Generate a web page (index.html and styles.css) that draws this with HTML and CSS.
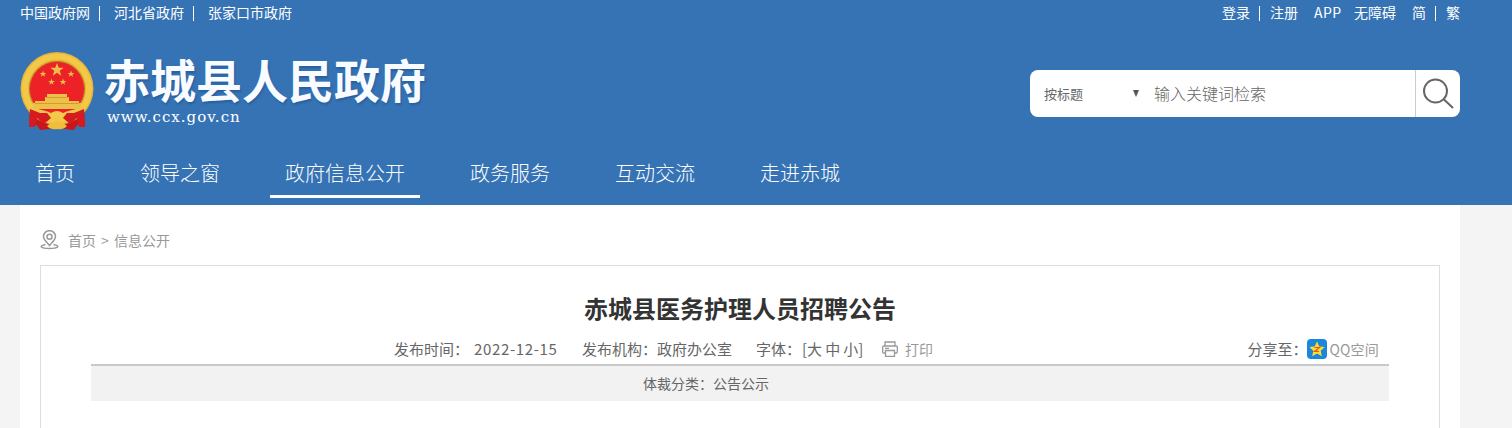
FILE: index.html
```html
<!DOCTYPE html>
<html lang="zh-CN">
<head>
    <meta charset="UTF-8">
    <title>赤城县医务护理人员招聘公告</title>
    <link rel="stylesheet" href="styles.css">
</head>
<body>
    <header class="header">
        <div class="top">
            <div class="top-links">
                <a>中国政府网</a><i class="sep"></i><a>河北省政府</a><i class="sep"></i><a>张家口市政府</a>
            </div>
            <div class="top-user">
                <a class="login">登录</a><i></i><a class="reg">注册</a><a class="app">APP</a><a class="wza">无障碍</a><a class="jian">简</a><i></i><a class="fan">繁</a>
            </div>
        </div>
        <div class="banner">
            <svg class="emblem" width="74" height="80" viewBox="0 0 74 80">
                <path d="M10 54 L9 75 L17 73 L20 78 L37 76 L54 78 L57 73 L65 75 L64 54Z" fill="#c8161b"/>
                <circle cx="37" cy="36.500" r="36.500" fill="#e6b43a"/>
                <circle cx="37" cy="36.500" r="32" fill="none" stroke="#f2c846" stroke-width="6"/>
                <circle cx="37" cy="37" r="27.500" fill="#ec2227" stroke="#b87a1c" stroke-width="1"/>
                <g fill="#edc04a">
                    <path id="star" d="M37 11l1.700 4.800h5l-4 3 1.500 4.900-4.200-3-4.200 3 1.500-4.900-4-3h5z"/>
                    <use href="#star" transform="translate(4.500 13) scale(.5)"/>
                    <use href="#star" transform="translate(32.500 13) scale(.5)"/>
                    <use href="#star" transform="translate(13 21) scale(.5)"/>
                    <use href="#star" transform="translate(24.500 21) scale(.5)"/>
                    <path d="M27 42h20v3h2v4h10v2h2v6H13v-6h2v-2h10v-4h2z"/>
                </g>
                <path d="M26 45.500h22M15 51.500h44" stroke="#c98c22" stroke-width=".7"/>
                <path d="M11 56 Q25 58 31 61 Q37 57 43 61 Q49 58 63 56 L59 63 L49 65 Q37 73 25 65 L15 63Z" fill="#f0c648"/>
                <path d="M10 57 L20 61 L27 61 L31 66 L24 72 L17 66 L15 75 L9 75Z M64 57 L54 61 L47 61 L43 66 L50 72 L57 66 L59 75 L65 75Z" fill="#d51b1f"/>
                <path d="M30 62q7-5 14 0l-2 5q-5-3-10 0z" fill="#f3c94c"/>
                <path d="M27 74 Q37 65 47 74 Q43 78 37 77 Q31 78 27 74Z" fill="#f0bd3d"/>
            </svg>
            <div class="site-name">
                <div class="name">赤城县人民政府</div>
                <div class="domain">www.ccx.gov.cn</div>
            </div>
            <div class="search">
                <div class="select"><span>按标题</span><i class="arrow"></i></div>
                <div class="keyword">输入关键词检索</div>
                <div class="search-btn">
                    <svg width="32" height="32" viewBox="0 0 32 32" fill="none" stroke="#666" stroke-width="2">
                        <circle cx="12.500" cy="13" r="11.500"/>
                        <path d="M20.500 21l9.500 9"/>
                    </svg>
                </div>
            </div>
        </div>
        <nav class="nav">
            <a>首页</a>
            <a>领导之窗</a>
            <a class="on">政府信息公开</a>
            <a>政务服务</a>
            <a>互动交流</a>
            <a>走进赤城</a>
        </nav>
    </header>
    <main class="main">
        <div class="crumb">
            <svg width="20" height="20" viewBox="0 0 20 20" fill="none" stroke="#999" stroke-width="1.500">
                <path d="M9.500 15.500C6 11.500 3.500 9.500 3.500 6.500a6 5.800 0 0 1 12 0c0 3-2.500 5-6 9z"/>
                <circle cx="9.500" cy="6.700" r="2.500"/>
                <path d="M5.500 14.500C-2 16 1 18.500 9.500 18.500S21 16 13.500 14.500"/>
            </svg>
            <a>首页</a><span class="gt">&gt;</span><a>信息公开</a>
        </div>
        <article class="article">
            <h1>赤城县医务护理人员招聘公告</h1>
            <div class="info">
                <span>发布时间：</span><span class="date">2022-12-15</span>
                <span class="org">发布机构：政府办公室</span>
                <span>字体：</span><span class="sizes">[大 中 小]</span>
                <span class="print">
                    <svg width="16" height="16" viewBox="0 0 16 16" fill="none" stroke="#999" stroke-width="1.300">
                        <path d="M3 5V1h10v4M3.500 12H1.800Q.7 12 .7 11V6Q.7 5 1.800 5h12.400Q15.300 5 15.300 6v5q0 1-1.100 1h-1.700M3.500 9.500h9v5.800h-9zM3 7.300h4"/>
                    </svg>
                    打印
                </span>
                <span class="share">分享至：
                    <svg width="20" height="20" viewBox="0 0 20 20">
                        <rect width="20" height="20" rx="4" fill="#1a86dc"/>
                        <path d="M10 2.500l2.300 5 5.400.6-4 3.700 1.100 5.400-4.800-2.700-4.800 2.700 1.100-5.400-4-3.700 5.400-.6z" fill="#ffdf2e"/>
                        <path d="M7.500 8.500h5l-5 3.800h4.500" fill="none" stroke="#e8581c" stroke-width="1.200"/>
                    </svg>
                    <em>QQ空间</em>
                </span>
            </div>
            <div class="category">体裁分类：公告公示</div>
        </article>
    </main>
</body>
</html>
```
FILE: styles.css
```css
* { box-sizing: border-box; margin: 0; padding: 0; }
body { background: #f4f4f4; color: #666; font-family: "Noto Sans CJK SC", sans-serif; font-size: 14px; font-weight: 400; height: 428px; overflow: hidden; }
i, em { font-style: normal; }
svg { display: block; flex: none; }
.header { height: 205px; padding: 0 52px 0 20px; background: #3573b5; color: #fff; }
.top { display: flex; justify-content: space-between; height: 27px; line-height: 25px; white-space: nowrap; }
.top-links, .top-user { display: flex; }
.top i { width: 1px; height: 15px; margin-top: 6px; background: #fff; }
.top .sep { margin: 6px 14px 0 9px; }
.login { margin-right: 9px; }
.reg { margin: 0 16px 0 10px; }
.app { width: 40px; letter-spacing: .5px; }
.wza { margin-right: 16px; }
.jian { margin-right: 9px; }
.fan { margin-left: 10px; }
.banner { display: flex; height: 114px; }
.emblem { margin-top: 25px; }
.site-name { margin: 25px 0 0 10px; }
.name { font-size: 46px; line-height: 52px; font-weight: 700; color: #f8fbff; white-space: nowrap; text-shadow: 1px 2px 2px rgba(0, 40, 90, .25); }
.domain { margin: 3px 0 0 3px; font: 15px/20px "DejaVu Serif", serif; letter-spacing: 1px; }
.search { display: flex; width: 430px; height: 47px; margin: 43px 0 0 auto; background: #fff; border-radius: 8px; color: #666; line-height: 47px; }
.select { display: flex; justify-content: space-between; width: 124px; padding: 0 15px 0 14px; font-size: 13px; }
.arrow { width: 6px; height: 7px; margin-top: 20px; background: #555; clip-path: polygon(0 0, 100% 0, 50% 100%); }
.keyword { flex: 1; font-size: 16px; font-weight: 300; }
.search-btn { width: 45px; padding: 8px 0 0 7px; border-left: 1px solid #ccc; }
.nav { display: flex; gap: 35px; height: 57px; font-size: 20px; font-weight: 300; }
.nav a { padding: 0 15px; line-height: 63px; border-bottom: 3px solid transparent; }
.nav .on { border-color: #fff; }
.main { width: 1440px; height: 223px; margin-left: 20px; padding: 0 20px; background: #fff; }
.crumb { display: flex; align-items: center; height: 60px; padding-top: 10px; color: #999; }
.crumb svg { margin-right: 8px; }
.gt { width: 18px; text-align: center; }
.article { height: 163px; border: 1px solid #ddd; border-bottom: 0; padding: 24px 50px 0; }
h1 { font-size: 24px; line-height: 36px; font-weight: 700; color: #333; text-align: center; }
.info { display: flex; height: 38px; padding-left: 303px; line-height: 46px; font-size: 15px; white-space: nowrap; }
.date { width: 108px; margin-left: 5px; letter-spacing: .65px; }
.org { margin-right: 24px; }
.sizes { width: 80px; margin-left: 1px; letter-spacing: -.1px; }
.print, .share { display: flex; align-items: center; height: 46px; }
.print { gap: 7px; color: #999; font-size: 14px; }
.share { margin: 0 10px 0 auto; }
.share em { margin-left: 2px; color: #999; font-size: 14px; letter-spacing: .2px; }
.category { height: 37px; border-top: 2px solid #c9c9c9; background: #f2f2f2; padding-left: 552px; line-height: 35px; }
```
